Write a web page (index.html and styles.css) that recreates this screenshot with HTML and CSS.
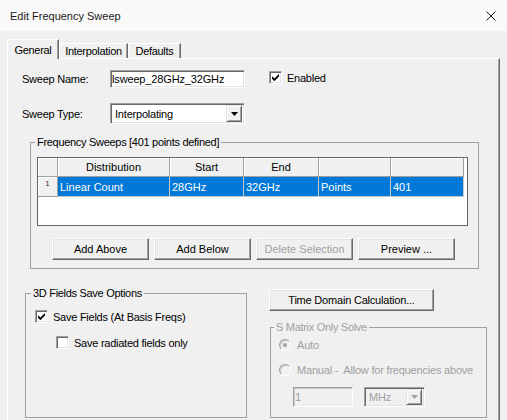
FILE: index.html
```html
<!DOCTYPE html>
<html>
<head>
<meta charset="utf-8">
<title>Edit Frequency Sweep</title>
<link rel="stylesheet" href="styles.css">
</head>
<body>
<div class="titlebar">
  <span class="title">Edit Frequency Sweep</span>
  <svg class="close" width="10" height="10" viewBox="0 0 10 10"><path d="M0.5 0.5L9.5 9.5M9.5 0.5L0.5 9.5" stroke="#1a1a1a" stroke-width="1" fill="none"/></svg>
</div>
<div class="tabs">
  <div class="tab active w-general">General</div>
  <div class="tab w-interp">Interpolation</div>
  <div class="tab w-defaults">Defaults</div>
</div>
<div class="panel">
  <div class="row row-name">
    <span class="label">Sweep Name:</span>
    <div class="textbox">lsweep_28GHz_32GHz</div>
    <div class="check enabled">
      <span class="cbox"><svg width="7" height="7" viewBox="0 0 7 7"><path d="M0 2.2L2.4 4.6L7 0V2.6L2.4 7.2L0 4.8Z" fill="#000"/></svg></span>
      <span class="ctext">Enabled</span>
    </div>
  </div>
  <div class="row row-type">
    <span class="label">Sweep Type:</span>
    <div class="combo">
      <span class="combo-text">Interpolating</span>
      <span class="drop"><svg width="7" height="4" viewBox="0 0 7 4"><path d="M0 0H7L3.5 4Z" fill="#000"/></svg></span>
    </div>
  </div>
  <fieldset class="group freq">
    <legend class="lg lg-freq">Frequency Sweeps [401 points defined]</legend>
    <div class="freq-body">
      <div class="grid">
        <div class="hc"></div>
        <div class="hc">Distribution</div>
        <div class="hc">Start</div>
        <div class="hc">End</div>
        <div class="hc"></div>
        <div class="hc"></div>
        <div class="hc rowno">1</div>
        <div class="dc">Linear Count</div>
        <div class="dc">28GHz</div>
        <div class="dc">32GHz</div>
        <div class="dc">Points</div>
        <div class="dc">401</div>
      </div>
      <div class="buttons">
        <div class="btn">Add Above</div>
        <div class="btn">Add Below</div>
        <div class="btn btn-disabled">Delete Selection</div>
        <div class="btn">Preview ...</div>
      </div>
    </div>
  </fieldset>
  <div class="bottom">
    <fieldset class="group fields">
      <legend class="lg lg-fields">3D Fields Save Options</legend>
      <div class="check c1">
        <span class="cbox"><svg width="7" height="7" viewBox="0 0 7 7"><path d="M0 2.2L2.4 4.6L7 0V2.6L2.4 7.2L0 4.8Z" fill="#000"/></svg></span>
        <span class="ctext">Save Fields (At Basis Freqs)</span>
      </div>
      <div class="check c2">
        <span class="cbox"></span>
        <span class="ctext">Save radiated fields only</span>
      </div>
    </fieldset>
    <div class="right">
      <div class="btn btn-wide">Time Domain Calculation...</div>
      <fieldset class="group smatrix">
        <legend class="lg lg-smatrix">S Matrix Only Solve</legend>
        <div class="opt o1"><span class="radio"><span class="dot"></span></span><span>Auto</span></div>
        <div class="opt o2"><span class="radio"></span><span>Manual -&nbsp; Allow for frequencies above</span></div>
        <div class="inputs">
          <div class="dtext">1</div>
          <div class="dcombo">
            <span class="combo-text">MHz</span>
            <span class="drop"><svg width="7" height="4" viewBox="0 0 7 4"><path d="M0 0H7L3.5 4Z" fill="#a0a0a0"/></svg></span>
          </div>
        </div>
      </fieldset>
    </div>
  </div>
</div>
</body>
</html>
```
FILE: styles.css
```css
* { box-sizing: border-box; }
html, body { margin: 0; padding: 0; }
body {
  width: 507px;
  height: 420px;
  overflow: hidden;
  background: #f0f0f0;
  font-family: "Liberation Sans", Arial, sans-serif;
  font-size: 11px;
  color: #000;
}

/* title bar */
.titlebar {
  height: 31px;
  background: #f9f9f9;
  display: flex;
  align-items: center;
  justify-content: space-between;
  padding: 0 11px 0 10px;
}
.title { font-size: 11px; color: #1a1a1a; }
.close { display: block; }

/* tabs */
.tabs {
  height: 27px;
  display: flex;
  align-items: flex-end;
  padding-left: 7px;
}
.tab {
  height: 15px;
  display: flex;
  align-items: center;
  justify-content: center;
  border-top: 1px solid #fff;
  border-left: 1px solid #fff;
  border-right: 1px solid #696969;
  box-shadow: inset -1px 0 #a0a0a0;
  letter-spacing: -0.3px;
  white-space: nowrap;
}
.tab.active {
  height: 20px;
  margin-bottom: -1px;
  position: relative;
  z-index: 1;
  background: #f0f0f0;
}
.w-general { width: 52px; }
.w-interp { width: 69px; }
.w-defaults { width: 53px; }

/* panel */
.panel {
  margin-left: 7px;
  width: 493px;
  height: 380px;
  border-top: 1px solid #fff;
  border-left: 1px solid #fff;
  border-right: 1px solid #696969;
  box-shadow: inset -1px 0 #a0a0a0;
}

.row { display: flex; align-items: center; padding-left: 14px; }
.row-name { margin-top: 11px; height: 18px; }
.row-type { margin-top: 15px; height: 21px; }
.label { width: 88px; letter-spacing: -0.25px; white-space: nowrap; }

.textbox, .combo, .dcombo, .dtext, .cbox {
  border: 1px solid;
  border-color: #a0a0a0 #fff #fff #a0a0a0;
  box-shadow: inset 1px 1px #696969, inset -1px -1px #e3e3e3;
}
.textbox {
  width: 135px;
  height: 18px;
  background: #fff;
  display: flex;
  align-items: center;
  padding-left: 1px;
  letter-spacing: -0.15px;
  white-space: nowrap;
}

.check { display: flex; align-items: center; gap: 5px; white-space: nowrap; }
.ctext { letter-spacing: -0.25px; }
.cbox {
  width: 13px;
  height: 13px;
  flex: none;
  background: #fff;
  display: flex;
  align-items: center;
  justify-content: center;
}
.cbox svg { display: block; }
.enabled { align-self: flex-start; margin-top: 1px; margin-left: 24px; }

.combo {
  width: 135px;
  height: 21px;
  background: #fff;
  display: flex;
  align-items: center;
  justify-content: space-between;
  padding: 2px;
}
.combo-text { padding-left: 2px; letter-spacing: -0.2px; }
.drop {
  width: 16px;
  height: 17px;
  background: #f0f0f0;
  border: 1px solid;
  border-color: #e3e3e3 #696969 #696969 #e3e3e3;
  box-shadow: inset 1px 1px #fff, inset -1px -1px #a0a0a0;
  display: flex;
  align-items: center;
  justify-content: center;
}
.drop svg { display: block; }

/* group boxes */
.group {
  padding: 0;
  min-width: 0;
  border: 1px solid #a0a0a0;
}
.lg {
  padding: 0 2px;
  line-height: 14px;
  letter-spacing: -0.3px;
  white-space: nowrap;
}
.freq { margin: 11px 0 0 22px; width: 449px; }
.lg-freq { margin-left: 4px; }
.freq-body { padding: 8px 0 8px 6px; }

/* grid */
.grid {
  width: 431px;
  height: 69px;
  background: #fff;
  border: 1px solid #646464;
  display: grid;
  grid-template-columns: 20px 112px 74px 75px 72px 73px;
  grid-template-rows: 19px 20px;
  align-content: start;
}
.hc {
  background: #f0f0f0;
  border-right: 1px solid #a0a0a0;
  border-bottom: 1px solid #a0a0a0;
  box-shadow: inset 1px 1px #fff;
  display: flex;
  align-items: center;
  justify-content: center;
  white-space: nowrap;
}
.hc.rowno {
  font-size: 8px;
  color: #333;
  align-items: flex-start;
  padding-top: 2px;
}
.dc {
  background: #0078d7;
  color: #fff;
  border-right: 1px solid #c8c8c8;
  border-bottom: 1px solid #c8c8c8;
  display: flex;
  align-items: center;
  padding-left: 2px;
  white-space: nowrap;
}

/* buttons */
.buttons { display: flex; gap: 5px; margin: 12px 0 0 15px; }
.btn {
  width: 97px;
  height: 22px;
  background: #f0f0f0;
  border: 1px solid;
  border-color: #fff #696969 #696969 #fff;
  box-shadow: inset -1px -1px #a0a0a0, inset 1px 1px #e3e3e3;
  display: flex;
  align-items: center;
  justify-content: center;
  white-space: nowrap;
  flex: none;
}
.btn-disabled { color: #a0a0a0; }

/* bottom */
.bottom { display: flex; align-items: flex-start; margin-top: 17px; }
.fields { margin: 0 0 0 17px; width: 222px; height: 132px; }
.lg-fields { margin-left: 5px; }
.c1 { margin: 10px 0 0 9px; }
.c2 { margin: 13px 0 0 30px; }

.right { margin-left: 22px; display: flex; flex-direction: column; }
.btn-wide { width: 165px; height: 22px; margin-top: 3px; letter-spacing: -0.2px; }
.smatrix { margin: 9px 0 0 1px; width: 217px; height: 98px; color: #a0a0a0; }
.lg-smatrix { margin-left: 3px; }

.opt { display: flex; align-items: center; gap: 6px; margin-left: 8px; letter-spacing: -0.2px; white-space: nowrap; }
.o1 { margin-top: 5px; }
.o2 { margin-top: 13px; }
.radio {
  width: 12px;
  height: 12px;
  flex: none;
  border-radius: 50%;
  border: 1px solid;
  border-color: #a0a0a0 #fff #fff #a0a0a0;
  box-shadow: inset 1px 1px #c8c8c8;
  background: #f0f0f0;
  display: flex;
  align-items: center;
  justify-content: center;
}
.dot { width: 4px; height: 4px; border-radius: 50%; background: #a0a0a0; }

.inputs { display: flex; gap: 11px; margin: 11px 0 0 22px; }
.dtext {
  width: 60px;
  height: 20px;
  background: #f0f0f0;
  box-shadow: inset 1px 1px #c8c8c8;
  display: flex;
  align-items: center;
  padding-left: 1px;
}
.dcombo {
  width: 61px;
  height: 20px;
  background: #f0f0f0;
  display: flex;
  align-items: center;
  justify-content: space-between;
  padding: 2px;
}
.dcombo .drop { height: 16px; }
```
